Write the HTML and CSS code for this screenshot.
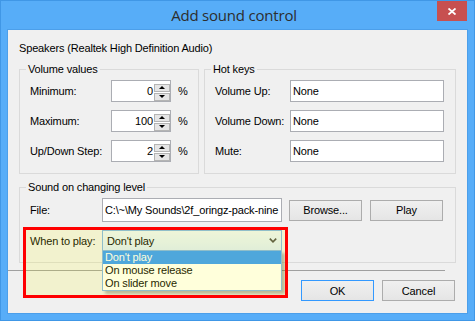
FILE: index.html
```html
<!DOCTYPE html>
<html>
<head>
<meta charset="utf-8">
<link rel="stylesheet" href="styles.css">
</head>
<body>
<div class="window">
  <div class="titlebar">
    <div class="title">Add sound control</div>
    <div class="close">
      <svg width="8" height="7" viewBox="0 0 8 7"><path d="M0.5 0.5 L7.5 6.5 M7.5 0.5 L0.5 6.5" stroke="#fff" stroke-width="1.8" fill="none"/></svg>
    </div>
  </div>
  <div class="client">
    <div class="device">Speakers (Realtek High Definition Audio)</div>
    <div class="groups-row">
      <fieldset class="group group-volume">
        <legend>Volume values</legend>
        <div class="row">
          <span class="lbl lbl-vol">Minimum:</span>
          <div class="spin"><span class="val">0</span><div class="spin-btns"><span class="sb up"></span><span class="sb down"></span></div></div>
          <span class="pct">%</span>
        </div>
        <div class="row">
          <span class="lbl lbl-vol">Maximum:</span>
          <div class="spin"><span class="val">100</span><div class="spin-btns"><span class="sb up"></span><span class="sb down"></span></div></div>
          <span class="pct">%</span>
        </div>
        <div class="row">
          <span class="lbl lbl-vol">Up/Down Step:</span>
          <div class="spin"><span class="val">2</span><div class="spin-btns"><span class="sb up"></span><span class="sb down"></span></div></div>
          <span class="pct">%</span>
        </div>
      </fieldset>
      <fieldset class="group group-keys">
        <legend>Hot keys</legend>
        <div class="row"><span class="lbl lbl-key">Volume Up:</span><div class="textbox key-box">None</div></div>
        <div class="row"><span class="lbl lbl-key">Volume Down:</span><div class="textbox key-box">None</div></div>
        <div class="row"><span class="lbl lbl-key">Mute:</span><div class="textbox key-box">None</div></div>
      </fieldset>
    </div>
    <fieldset class="group group-sound">
      <legend>Sound on changing level</legend>
      <div class="row file-row">
        <span class="lbl lbl-sound">File:</span>
        <div class="textbox file-box"><span class="file-text">C:\~\My Sounds\2f_oringz-pack-nine</span></div>
        <button class="btn browse">Browse...</button>
        <button class="btn play">Play</button>
      </div>
      <div class="row combo-row">
        <span class="lbl lbl-sound">When to play:</span>
        <div class="combo">
          <span class="combo-text">Don't play</span>
          <svg class="chev" width="8" height="5" viewBox="0 0 8 5"><path d="M0.8 0.6 L4 3.8 L7.2 0.6" stroke="#4a4a4a" stroke-width="1.6" fill="none"/></svg>
          <div class="droplist">
            <div class="item selected">Don't play</div>
            <div class="item">On mouse release</div>
            <div class="item">On slider move</div>
          </div>
        </div>
      </div>
    </fieldset>
    <div class="sep"></div>
    <div class="actions">
      <button class="btn default">OK</button>
      <button class="btn">Cancel</button>
    </div>
    <div class="highlight"></div>
  </div>
</div>
</body>
</html>
```
FILE: styles.css
```css
* { box-sizing: border-box; }
html, body { margin: 0; padding: 0; }
body {
  width: 475px;
  height: 321px;
  overflow: hidden;
  font-family: "Liberation Sans", Arial, sans-serif;
  font-size: 11px;
  letter-spacing: -0.15px;
  color: #000;
}
.window {
  width: 475px;
  height: 321px;
  background: #57adf8;
  border: 1px solid #4097e6;
  display: flex;
  flex-direction: column;
}
.titlebar {
  height: 29px;
  display: grid;
  grid-template-columns: 1fr auto 1fr;
  padding-right: 7px;
}
.title {
  grid-column: 2;
  font-family: "Open Sans", "Noto Sans", sans-serif;
  font-size: 15px;
  letter-spacing: -0.2px;
  line-height: 28px;
  color: #2d2d2d;
  white-space: nowrap;
}
.close {
  grid-column: 3;
  justify-self: end;
  width: 30px;
  height: 20px;
  background: #c75050;
  display: flex;
  align-items: center;
  justify-content: center;
}
.client {
  position: relative;
  margin: 0 7px 7px 7px;
  flex: 1;
  background: #f0f0f0;
  box-shadow: 0 0 0 1px #4c9fea;
  padding: 12px 11px 0 11px;
}
.device {
  line-height: 13px;
  height: 13px;
  margin-bottom: 8px;
}
.groups-row {
  display: flex;
  gap: 5px;
}
.group {
  margin: 0;
  min-width: 0;
  border: 1px solid #dadada;
  padding: 4px 10px 11px 10px;
  display: flex;
  flex-direction: column;
  gap: 8px;
}
.group legend {
  padding: 0 2px;
  margin-left: -4px;
  line-height: 13px;
  font-size: 11px;
}
.group-volume { width: 180px; }
.group-keys { width: 252px; }
.row {
  display: flex;
  align-items: center;
  height: 22px;
}
.lbl { flex: none; white-space: nowrap; }
.lbl-vol { width: 81px; }
.lbl-key { width: 75px; }
.lbl-sound { width: 72px; }
.spin {
  width: 60px;
  height: 22px;
  border: 1px solid #abadb3;
  background: #fff;
  display: flex;
  align-items: center;
}
.spin .val {
  flex: 1;
  text-align: right;
  padding-right: 1px;
  line-height: 13px;
}
.spin-btns {
  display: flex;
  flex-direction: column;
  gap: 1px;
  width: 16px;
  margin-top: 2px;
}
.sb {
  height: 8px;
  border: 1px solid #b4b4b4;
  background: #e6e6e6;
  display: flex;
  align-items: center;
  justify-content: center;
}
.sb::before {
  content: "";
  width: 0;
  height: 0;
  border-left: 3px solid transparent;
  border-right: 3px solid transparent;
}
.sb.up::before { border-bottom: 3px solid #000; }
.sb.down::before { border-top: 3px solid #000; }
.pct { margin-left: 7px; }
.textbox {
  height: 22px;
  border: 1px solid #abadb3;
  background: #fff;
  padding: 0 2px;
  line-height: 20px;
  white-space: nowrap;
  overflow: hidden;
}
.key-box { width: 154px; }
.group-sound {
  margin-top: 7px;
  width: 437px;
  padding-bottom: 11px;
}
.file-row { height: 24px; }
.file-box { width: 180px; height: 24px; line-height: 22px; }
.btn {
  width: 73px;
  height: 21px;
  padding: 0;
  border: 1px solid #acacac;
  background: linear-gradient(#f0f0f0, #e5e5e5);
  font-family: "Liberation Sans", Arial, sans-serif;
  font-size: 11px;
  letter-spacing: -0.15px;
  color: #000;
}
.browse { margin-left: 7px; }
.play { margin-left: 8px; }
.btn.default { border-color: #3399ff; }
.combo-row { height: 21px; }
.combo {
  position: relative;
  width: 180px;
  height: 21px;
  border: 1px solid #7eb4ea;
  background: linear-gradient(#ecf4fc, #dcecfc);
  display: flex;
  align-items: center;
  padding-left: 4px;
}
.chev { margin-left: auto; margin-right: 4px; }
.droplist {
  position: absolute;
  left: -1px;
  top: 100%;
  width: 180px;
  border: 1px solid #7eb4ea;
  background: #fff;
  box-shadow: 3px 3px 3px rgba(0, 0, 0, 0.28);
}
.item {
  line-height: 13px;
  height: 13px;
  padding-left: 2px;
  white-space: nowrap;
}
.item.selected { background: #3399ff; color: #fff; }
.sep {
  margin: 7px 11px 0 -11px;
  height: 1px;
  background: #a0a0a0;
}
.actions {
  display: flex;
  justify-content: flex-end;
  gap: 8px;
  margin-top: 9px;
  margin-right: 1px;
}
.highlight {
  position: absolute;
  left: 15px;
  top: 197px;
  width: 265px;
  height: 71px;
  border: 3px solid #ff0000;
  background: rgba(255, 255, 0, 0.14);
  pointer-events: none;
}
```
